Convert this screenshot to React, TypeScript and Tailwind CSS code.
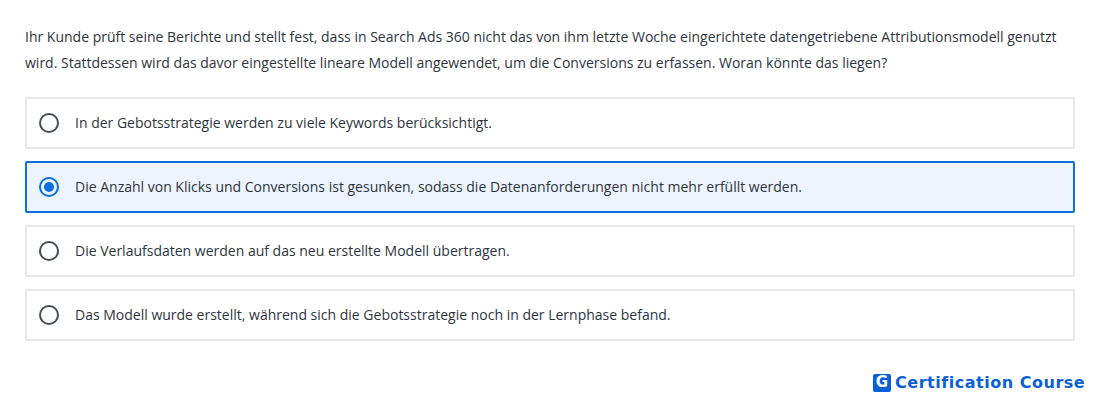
const answers = [
  'In der Gebotsstrategie werden zu viele Keywords berücksichtigt.',
  'Die Anzahl von Klicks und Conversions ist gesunken, sodass die Datenanforderungen nicht mehr erfüllt werden.',
  'Die Verlaufsdaten werden auf das neu erstellte Modell übertragen.',
  'Das Modell wurde erstellt, während sich die Gebotsstrategie noch in der Lernphase befand.',
];

function Radio({ checked }: { checked: boolean }) {
  if (checked) {
    return (
      <span className="flex h-5 w-5 shrink-0 items-center justify-center rounded-full border-2 border-[#0b6fde]">
        <span className="h-[10px] w-[10px] rounded-full bg-[#0b6fde]" />
      </span>
    );
  }
  return <span className="h-5 w-5 shrink-0 rounded-full border-2 border-[#474d57]" />;
}

export default function App() {
  return (
    <div className="relative h-[401px] w-[1100px] overflow-hidden bg-white font-['Open_Sans',sans-serif] text-[#2d3540]">
      <div className="px-[25px] pt-[24px]">
        <p className="text-[14px] leading-[25.5px]">
          Ihr Kunde prüft seine Berichte und stellt fest, dass in Search Ads 360 nicht das von ihm letzte Woche eingerichtete datengetriebene Attributionsmodell genutzt wird. Stattdessen wird das davor eingestellte lineare Modell angewendet, um die Conversions zu erfassen. Woran könnte das liegen?
        </p>
        <div className="mt-[22px] flex flex-col gap-[12px]">
          {answers.map((text, i) => (
            <div
              key={text}
              className={
                i === 1
                  ? 'flex h-[52px] items-center gap-[16px] rounded-[2px] border-2 border-[#0b6fde] bg-[#eef4fd] pl-[12px]'
                  : 'flex h-[52px] items-center gap-[16px] rounded-[2px] border-2 border-[#e8e8e8] bg-white pl-[12px]'
              }
            >
              <Radio checked={i === 1} />
              <span className="pb-[2px] text-[14px]">{text}</span>
            </div>
          ))}
        </div>
      </div>
      <div className="absolute left-[873px] top-[373px] flex items-center gap-[4px]">
        <span className="flex h-[18px] w-[18px] items-center justify-center rounded-[2px] bg-[#0b5fd8] font-['DejaVu_Sans',sans-serif] text-[15px] font-bold leading-none text-white">
          G
        </span>
        <span className="pt-[1px] font-['DejaVu_Sans',sans-serif] text-[16px] font-bold leading-[18px] tracking-[0.52px] text-[#0b5fd8]">
          Certification Course
        </span>
      </div>
    </div>
  );
}
